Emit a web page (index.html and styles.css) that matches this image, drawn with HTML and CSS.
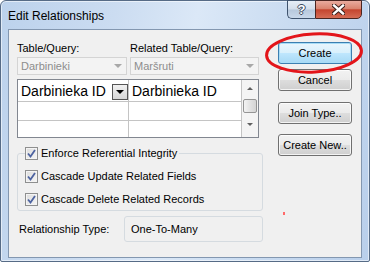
FILE: index.html
```html
<!DOCTYPE html>
<html>
<head>
	<meta name="viewport" content="width=device-width, initial-scale=1.0">
	<title>Edit Relationships</title>
	<link rel="stylesheet" href="styles.css">
</head>
<body>
	<div class="window">
		<div class="titlebar">
			<span class="title">Edit Relationships</span>
			<div class="caption-buttons">
				<span class="cap help">?</span>
				<span class="cap close">
					<svg width="13" height="11" viewBox="0 0 13 11">
						<path d="M2 1.5 L11 9.5 M11 1.5 L2 9.5" stroke="#3b1e1a" stroke-width="4.4" stroke-linecap="square"/>
						<path d="M2 1.5 L11 9.5 M11 1.5 L2 9.5" stroke="#fff" stroke-width="2.4" stroke-linecap="square"/>
					</svg>
				</span>
			</div>
		</div>

		<div class="client">
			<div class="main">
				<div class="pickers">
					<div class="picker first">
						<label class="picker-label">Table/Query:</label>
						<div class="combo"><span>Darbinieki</span><span class="combo-arrow"></span></div>
					</div>
					<div class="picker second">
						<label class="picker-label">Related Table/Query:</label>
						<div class="combo"><span>Maršruti</span><span class="combo-arrow"></span></div>
					</div>
				</div>

				<div class="grid">
					<div class="cols">
						<div class="row top">
							<div class="cell left">Darbinieka ID<span class="dd"></span></div>
							<div class="cell">Darbinieka ID</div>
						</div>
						<div class="row">
							<div class="cell left"></div>
							<div class="cell"></div>
						</div>
						<div class="row">
							<div class="cell left"></div>
							<div class="cell"></div>
						</div>
					</div>
					<div class="scrollbar">
						<span class="arrow-up"></span>
						<span class="thumb"></span>
						<span class="arrow-down"></span>
					</div>
				</div>

				<fieldset class="options">
					<legend class="opt-legend">
						<span class="opt">
							<span class="check"><svg width="9" height="9" viewBox="0 0 9 9"><path d="M1 4.5 L3.5 7.5 L8 1" fill="none" stroke="#4d63a0" stroke-width="1.8"/></svg></span>
							Enforce Referential Integrity
						</span>
					</legend>
					<div class="opt">
						<span class="check"><svg width="9" height="9" viewBox="0 0 9 9"><path d="M1 4.5 L3.5 7.5 L8 1" fill="none" stroke="#4d63a0" stroke-width="1.8"/></svg></span>
						Cascade Update Related Fields
					</div>
					<div class="opt">
						<span class="check"><svg width="9" height="9" viewBox="0 0 9 9"><path d="M1 4.5 L3.5 7.5 L8 1" fill="none" stroke="#4d63a0" stroke-width="1.8"/></svg></span>
						Cascade Delete Related Records
					</div>
				</fieldset>

				<div class="reltype">
					<span class="reltype-label">Relationship Type:</span>
					<div class="relbox">One-To-Many</div>
				</div>
			</div>

			<div class="buttons">
				<button class="btn default b-create">Create</button>
				<button class="btn b-cancel">Cancel</button>
				<button class="btn b-join">Join Type..</button>
				<button class="btn b-new">Create New..</button>
			</div>
		</div>

		<svg class="highlight" width="104" height="46" viewBox="0 0 104 46">
			<ellipse cx="51" cy="23" rx="47.5" ry="19" transform="rotate(-3 51 23)" fill="none" stroke="#e3151a" stroke-width="3"/>
		</svg>
		<span class="dot"></span>
	</div>
</body>
</html>
```

FILE: styles.css
```css
* {
	box-sizing: border-box;
}
body {
	margin: 0;
	font-family: "Liberation Sans", Arial, sans-serif;
	font-size: 11px;
	color: #000;
}

/* window frame */
.window {
	position: relative;
	width: 370px;
	height: 262px;
	border: 1px solid #566b86;
	border-radius: 6px 6px 2px 2px;
	padding: 0 7px 3px;
	background: linear-gradient(100deg, #bcd2ec 0%, #cbdcf1 28%, #dbe8f7 48%, #cadcf1 70%, #b9cfeb 100%);
	box-shadow: inset 0 0 0 1px rgba(255, 255, 255, 0.55);
}
.titlebar {
	display: flex;
	align-items: flex-start;
	height: 28px;
}
.title {
	padding-top: 8px;
	font-size: 12px;
	line-height: 15px;
}
.caption-buttons {
	display: flex;
	margin-left: auto;
	margin-top: -1px;
}
.cap {
	display: flex;
	align-items: center;
	justify-content: center;
	height: 19px;
}
.help {
	width: 28px;
	border: 1px solid #3f536d;
	border-right: none;
	border-radius: 0 0 0 5px;
	background: linear-gradient(#e6eef7, #d3deeb 48%, #b7c8dc 52%, #c9d8ea);
	color: #fff;
	font-weight: bold;
	font-size: 13px;
	text-shadow: 1px 0 0 #3a4a60, -1px 0 0 #3a4a60, 0 1px 0 #3a4a60, 0 -1px 0 #3a4a60;
}
.close {
	width: 47px;
	border: 1px solid #4a2520;
	border-radius: 0 0 5px 0;
	background: linear-gradient(#e9ab9e, #d9846f 45%, #c4452f 52%, #d56c55);
}

/* client area */
.client {
	display: flex;
	height: 229px;
	border: 1px solid #8397b0;
	background: #f0f0f0;
	padding: 11px 0 0 8px;
}
.main {
	width: 246px;
}

.pickers {
	display: flex;
	gap: 3px;
}
.picker.first {
	width: 110px;
}
.picker.second {
	width: 129px;
}
.picker-label {
	display: block;
	line-height: 14px;
	margin-bottom: 2px;
	white-space: nowrap;
}
.combo {
	display: flex;
	align-items: center;
	justify-content: space-between;
	height: 18px;
	border: 1px solid #d4d4d4;
	background: #f3f3f3;
	color: #8d8d8d;
	padding: 0 4px 0 3px;
}
.combo-arrow {
	width: 0;
	height: 0;
	border-left: 4px solid transparent;
	border-right: 4px solid transparent;
	border-top: 4px solid #a8a8a8;
}

/* field grid */
.grid {
	display: flex;
	width: 242px;
	height: 59px;
	margin-top: 4px;
	border: 1px solid #828790;
	background: #fff;
	overflow: hidden;
}
.cols {
	flex: 1;
}
.row {
	display: flex;
	height: 19px;
	border-bottom: 1px solid #c4c4c4;
}
.row.top {
	height: 22px;
}
.cell {
	flex: 1;
	display: flex;
	align-items: center;
	padding-left: 3px;
	font-size: 14px;
	border-right: 1px solid #c4c4c4;
}
.cell.left {
	flex: none;
	width: 111px;
}
.dd {
	width: 16px;
	height: 16px;
	margin-left: auto;
	margin-right: 0;
	align-self: flex-end;
	margin-bottom: 1px;
	border: 1px solid #555;
	background: linear-gradient(#f0f0f0, #d6d6d6) ;
	display: flex;
	align-items: center;
	justify-content: center;
}
.dd::after {
	content: "";
	border-left: 4px solid transparent;
	border-right: 4px solid transparent;
	border-top: 4px solid #000;
}
.scrollbar {
	display: flex;
	flex-direction: column;
	align-items: center;
	width: 16px;
	background: #f4f4f4;
}
.arrow-up,
.arrow-down {
	width: 0;
	height: 0;
	border-left: 3px solid transparent;
	border-right: 3px solid transparent;
}
.arrow-up {
	margin-top: 7px;
	border-bottom: 3px solid #606060;
}
.arrow-down {
	margin-top: 10px;
	border-top: 3px solid #606060;
}
.thumb {
	width: 14px;
	height: 14px;
	margin-top: 9px;
	border: 1px solid #959595;
	border-radius: 2px;
	background: linear-gradient(90deg, #f3f3f3, #e2e2e2 50%, #d4d4d4);
}

/* options group */
.options {
	margin: 8px 0 0;
	padding: 0 0 4px 7px;
	border: 1px solid #d5dbe0;
	border-radius: 3px;
}
.opt-legend {
	padding: 0 2px 0 0;
	line-height: 14px;
}
.opt {
	display: flex;
	align-items: center;
	gap: 3px;
	height: 14px;
	line-height: 14px;
}
.options > .opt {
	margin-top: 9px;
}
.check {
	display: flex;
	align-items: center;
	justify-content: center;
	width: 13px;
	height: 13px;
	border: 1px solid #8e8f8f;
	background: linear-gradient(135deg, #dcdcdc, #f6f6f6);
	box-shadow: inset 0 0 0 1px #f4f4f4;
}

.reltype {
	display: flex;
	align-items: center;
	margin-top: 5px;
}
.reltype-label {
	padding-left: 2px;
}
.relbox {
	margin-left: auto;
	width: 139px;
	height: 26px;
	line-height: 24px;
	padding-left: 6px;
	border: 1px solid #d5dbe0;
	border-radius: 3px;
}

/* command buttons */
.buttons {
	display: flex;
	flex-direction: column;
	width: 74px;
	margin-left: 15px;
}
.btn {
	height: 22px;
	padding: 0;
	font: inherit;
	color: #000;
	border: 1px solid #707070;
	border-radius: 3px;
	background: linear-gradient(#f2f2f2, #ebebeb 48%, #dddddd 52%, #cfcfcf);
	box-shadow: inset 0 0 0 1px rgba(255, 255, 255, 0.75);
}
.btn.default {
	border-color: #3c7fb1;
	background: linear-gradient(#eaf6fd, #d9f0fc 48%, #bee6fd 52%, #a7d9f5);
	box-shadow: inset 0 0 0 1px #a8dcf6;
}
.b-create {
	margin-top: 1px;
}
.b-cancel {
	margin-top: 5px;
}
.b-join {
	margin-top: 11px;
}
.b-new {
	margin-top: 10px;
}

/* annotation drawn over the dialog */
.highlight {
	position: absolute;
	left: 262px;
	top: 29px;
}
.dot {
	position: absolute;
	left: 282px;
	top: 211px;
	width: 2px;
	height: 3px;
	background: #ff6a6a;
}
```
